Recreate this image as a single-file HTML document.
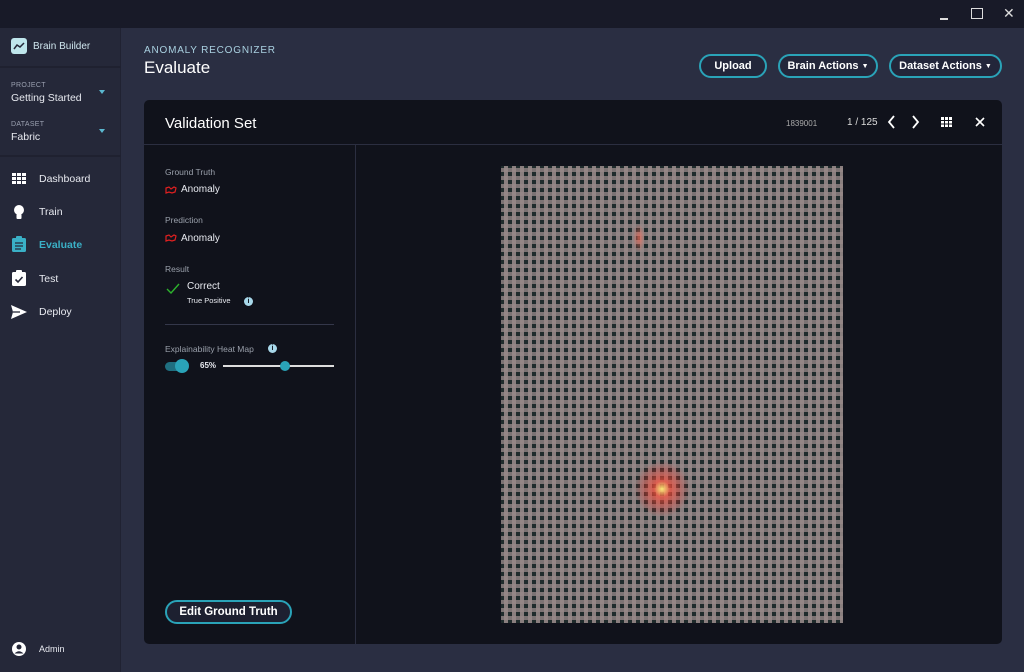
<!DOCTYPE html>
<html><head><meta charset="utf-8"><style>
*{box-sizing:border-box;margin:0;padding:0}
body{width:1024px;height:672px;background:#2a2e42;font-family:"Liberation Sans",sans-serif;color:#e8eaf0;position:relative;overflow:hidden}
.tb{position:absolute;left:0;top:0;width:1024px;height:28px;background:#181a28}
.side{position:absolute;left:0;top:28px;width:121px;height:644px;background:#252839;border-right:1px solid #202232}
.abs{position:absolute}
.sep{position:absolute;left:0;width:121px;height:2px;background:#1f2130}
.nav{position:absolute;left:39px;font-size:10.5px;color:#e8eaf0}
.lab{font-size:7px;color:#9aa0b0;letter-spacing:.3px}
.btn{position:absolute;height:24px;border:2px solid #2aa3b8;border-radius:12px;font-size:11px;font-weight:bold;color:#fff;display:flex;align-items:center;justify-content:center;background:#23263a}
.card{position:absolute;left:144px;top:100px;width:858px;height:544px;background:#10121b;border-radius:5px}
.fab{position:absolute;left:501px;top:166px;width:342px;height:457px;background-color:#1f2b2c;
background-image:radial-gradient(circle at 161px 323px,rgba(255,240,120,.95) 0,rgba(255,80,60,.7) 8px,rgba(255,50,40,.25) 20px,transparent 28px),radial-gradient(ellipse 6px 14px at 138px 72px,rgba(255,110,90,.7),transparent),
repeating-linear-gradient(90deg,transparent 0,transparent 3px,rgba(150,136,136,.9) 3px,rgba(150,136,136,.9) 7px,transparent 7px,transparent 8px),
repeating-linear-gradient(0deg,transparent 0,transparent 3px,rgba(140,128,128,.85) 3px,rgba(140,128,128,.85) 7px,transparent 7px,transparent 8px)}
.i{font-size:10px}
</style></head><body>
<div class="tb"></div>
<div class="abs" style="left:940px;top:18px;width:8px;height:1.5px;background:#ddd"></div>
<div class="abs" style="left:971px;top:8px;width:12px;height:11px;border:1.5px solid #ddd"></div>
<div class="abs" style="left:1003px;top:5px;font-size:14px;color:#ddd">✕</div>
<div class="side">
<div class="abs" style="left:11px;top:10px;width:16px;height:16px;background:#bfe6ec;border-radius:3px"><svg width="16" height="16"><path d="M3 11 L6 7 L9 9 L13 5" stroke="#252839" stroke-width="1.5" fill="none"/></svg></div>
<div class="abs" style="left:33px;top:13px;font-size:10px;color:#cfe6ee">Brain Builder</div>
<div class="sep" style="top:38px"></div>
<div class="abs lab" style="left:11px;top:54px">PROJECT</div>
<div class="abs" style="left:11px;top:64px;font-size:10.5px">Getting Started</div>
<div class="abs" style="left:99px;top:62px;width:0;height:0;border:3px solid transparent;border-top:4px solid #5bb8d0"></div>
<div class="abs lab" style="left:11px;top:93px">DATASET</div>
<div class="abs" style="left:11px;top:103px;font-size:10.5px">Fabric</div>
<div class="abs" style="left:99px;top:101px;width:0;height:0;border:3px solid transparent;border-top:4px solid #5bb8d0"></div>
<div class="sep" style="top:127px"></div>
<svg class="abs" style="left:12px;top:145px" width="14" height="12"><g fill="#fff"><rect x="0" y="0" width="4" height="3"/><rect x="5" y="0" width="4" height="3"/><rect x="10" y="0" width="4" height="3"/><rect x="0" y="4" width="4" height="3"/><rect x="5" y="4" width="4" height="3"/><rect x="10" y="4" width="4" height="3"/><rect x="0" y="8" width="4" height="3"/><rect x="5" y="8" width="4" height="3"/><rect x="10" y="8" width="4" height="3"/></g></svg>
<div class="nav" style="top:145px">Dashboard</div>
<svg class="abs" style="left:13px;top:177px" width="12" height="15"><circle cx="6" cy="5" r="5" fill="#fff"/><rect x="3.5" y="9" width="5" height="5" rx="1" fill="#fff"/></svg>
<div class="nav" style="top:178px">Train</div>
<svg class="abs" style="left:12px;top:208px" width="14" height="16"><rect x="0" y="2" width="14" height="14" rx="1.5" fill="#3ab0c6"/><rect x="4" y="0" width="6" height="4" rx="1" fill="#3ab0c6"/><g stroke="#252839" stroke-width="1.2"><path d="M3 7h8M3 10h8M3 13h6"/></g></svg>
<div class="nav" style="top:211px;color:#3ab0c6;font-weight:bold">Evaluate</div>
<svg class="abs" style="left:12px;top:242px" width="14" height="16"><rect x="0" y="2" width="14" height="14" rx="1.5" fill="#fff"/><rect x="4" y="0" width="6" height="4" rx="1" fill="#fff"/><path d="M3.5 9.5 L6 12 L10.5 7" stroke="#252839" stroke-width="1.6" fill="none"/></svg>
<div class="nav" style="top:245px">Test</div>
<svg class="abs" style="left:11px;top:277px" width="16" height="14"><path d="M0 0 L16 7 L0 14 L2 7 Z" fill="#fff"/><path d="M2 7H9" stroke="#252839" stroke-width="1.3"/></svg>
<div class="nav" style="top:278px">Deploy</div>
<svg class="abs" style="left:12px;top:614px" width="14" height="14"><circle cx="7" cy="7" r="7" fill="#fff"/><circle cx="7" cy="5" r="2.5" fill="#252839"/><path d="M2.5 11.5 Q7 7 11.5 11.5" fill="#252839"/></svg>
<div class="nav" style="top:616px;font-size:9px">Admin</div>
</div>
<div class="abs" style="left:144px;top:45px;font-size:10px;color:#a9d0e0;letter-spacing:.8px">ANOMALY RECOGNIZER</div>
<div class="abs" style="left:144px;top:58px;font-size:17px;color:#fff">Evaluate</div>
<div class="btn" style="left:699px;top:54px;width:68px">Upload</div>
<div class="btn" style="left:778px;top:54px;width:100px">Brain Actions&nbsp;<span style="font-size:7px">▼</span></div>
<div class="btn" style="left:889px;top:54px;width:113px">Dataset Actions&nbsp;<span style="font-size:7px">▼</span></div>
<div class="card">
<div class="abs" style="left:21px;top:15px;font-size:15px;color:#fff">Validation Set</div>
<div class="abs" style="left:642px;top:19px;font-size:8px;color:#aaa">1839001</div>
<div class="abs" style="left:703px;top:17px;font-size:10px;color:#ddd">1 / 125</div>
<svg class="abs" style="left:743px;top:15px" width="34" height="14"><path d="M7 1 L2 7 L7 13 M26 1 L31 7 L26 13" stroke="#fff" stroke-width="1.8" fill="none"/></svg>
<svg class="abs" style="left:797px;top:17px" width="11" height="10"><g fill="#fff"><rect x="0" y="0" width="3" height="3"/><rect x="4" y="0" width="3" height="3"/><rect x="8" y="0" width="3" height="3"/><rect x="0" y="4" width="3" height="2.5"/><rect x="4" y="4" width="3" height="2.5"/><rect x="8" y="4" width="3" height="2.5"/><rect x="0" y="7.5" width="3" height="2.5"/><rect x="4" y="7.5" width="3" height="2.5"/><rect x="8" y="7.5" width="3" height="2.5"/></g></svg>
<svg class="abs" style="left:831px;top:17px" width="10" height="10"><path d="M1 1 L9 9 M9 1 L1 9" stroke="#fff" stroke-width="1.6"/></svg>
<div class="abs" style="left:0;top:44px;width:858px;height:1px;background:#2b2e40"></div>
<div class="abs" style="left:211px;top:45px;width:1px;height:499px;background:#2b2e40"></div>
<div class="abs" style="left:21px;top:67px;font-size:8.5px;color:#9aa0ab">Ground Truth</div>
<svg class="abs" style="left:21px;top:86px" width="12" height="8"><path d="M1 2 L4 1 L6 3 L9 1 L11 2 L10 6 L7 7 L4 6 L1 7 Z" stroke="#e02020" stroke-width="1.2" fill="none"/></svg>
<div class="abs i" style="left:37px;top:84px">Anomaly</div>
<div class="abs" style="left:21px;top:115px;font-size:8.5px;color:#9aa0ab">Prediction</div>
<svg class="abs" style="left:21px;top:134px" width="12" height="8"><path d="M1 2 L4 1 L6 3 L9 1 L11 2 L10 6 L7 7 L4 6 L1 7 Z" stroke="#e02020" stroke-width="1.2" fill="none"/></svg>
<div class="abs i" style="left:37px;top:133px">Anomaly</div>
<div class="abs" style="left:21px;top:164px;font-size:8.5px;color:#9aa0ab">Result</div>
<svg class="abs" style="left:22px;top:183px" width="14" height="11"><path d="M1 6 L5 10 L13 1" stroke="#2db32d" stroke-width="1.4" fill="none"/></svg>
<div class="abs i" style="left:43px;top:181px">Correct</div>
<div class="abs" style="left:43px;top:196px;font-size:7.5px">True Positive</div>
<div class="abs" style="left:100px;top:197px;width:9px;height:9px;border-radius:50%;background:#a8d8ea;font-size:7px;color:#10121b;text-align:center;line-height:9px;font-weight:bold">i</div>
<div class="abs" style="left:21px;top:224px;width:169px;height:1px;background:#34374a"></div>
<div class="abs" style="left:21px;top:244px;font-size:8.5px;color:#9aa0ab">Explainability Heat Map</div>
<div class="abs" style="left:124px;top:244px;width:9px;height:9px;border-radius:50%;background:#a8d8ea;font-size:7px;color:#10121b;text-align:center;line-height:9px;font-weight:bold">i</div>
<div class="abs" style="left:21px;top:262px;width:22px;height:9px;border-radius:5px;background:#1f6f80"></div>
<div class="abs" style="left:31px;top:259px;width:14px;height:14px;border-radius:50%;background:#2aa3b8"></div>
<div class="abs" style="left:56px;top:261px;font-size:8px;font-weight:bold">65%</div>
<div class="abs" style="left:79px;top:265px;width:111px;height:2px;background:#ddd"></div>
<div class="abs" style="left:136px;top:261px;width:10px;height:10px;border-radius:50%;background:#2aa3b8"></div>
<div class="btn" style="left:21px;top:500px;width:127px;height:24px;background:#1d2030;font-size:11.5px">Edit Ground Truth</div>
</div>
<div class="fab"></div>
</body></html>
